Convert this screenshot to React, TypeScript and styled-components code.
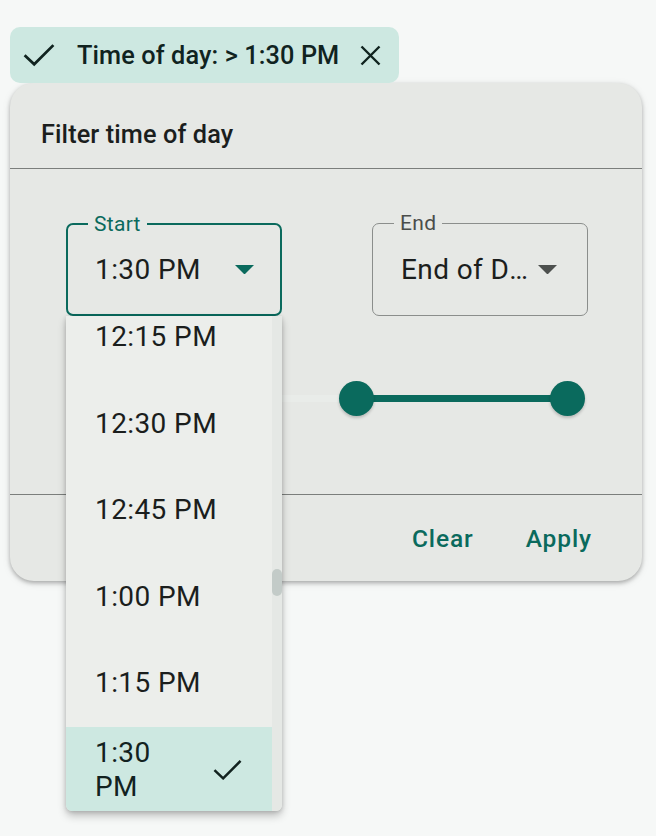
import styled, { createGlobalStyle } from 'styled-components'

const TEAL = '#0a6a5d'
const INK = '#1b1e1d'

const GlobalStyle = createGlobalStyle`
  body {
    margin: 0;
    background: #f6f8f7;
    font-family: Roboto, 'Noto Sans', sans-serif;
    color: ${INK};
  }
`

const options = ['12:15 PM', '12:30 PM', '12:45 PM', '1:00 PM', '1:15 PM', '1:30 PM']
const selected = '1:30 PM'

// slider range is the whole day in quarter hours, start at 1:30 PM
const startPct = (54 / 96) * 100
const endPct = 100

const CheckIcon = ({ width, stroke }: { width: number; stroke: number }) => (
  <svg width={width} height={(width * 22) / 30} viewBox="0 0 30 22" fill="none" stroke="currentColor" strokeWidth={stroke}>
    <polyline points="1.5,11.5 10.5,20 28.5,2" />
  </svg>
)

const CloseIcon = () => (
  <svg width={21} height={21} viewBox="0 0 21 21" fill="none" stroke="currentColor" strokeWidth={2.4}>
    <path d="M1.5 1.5l18 18M19.5 1.5l-18 18" />
  </svg>
)

const ArrowIcon = ({ color }: { color: string }) => (
  <svg width={19} height={9.5} viewBox="7 10 10 5" fill={color}>
    <path d="M7 10l5 5 5-5z" />
  </svg>
)

export default function App() {
  return (
    <>
      <GlobalStyle />
      <Page>
        <Chip>
          <CheckIcon width={32} stroke={2.6} />
          <ChipText>Time of day: &gt; 1:30 PM</ChipText>
          <CloseIcon />
        </Chip>

        <Panel>
          <Header>
            <Title>Filter time of day</Title>
          </Header>

          <Body>
            <Fields>
              <Field $active>
                <FieldLabel $active>Start</FieldLabel>
                <Value>1:30 PM</Value>
                <ArrowBox>
                  <ArrowIcon color={TEAL} />
                </ArrowBox>

                <Menu>
                  <MenuList>
                    {options.map((o) => (
                      <MenuItem key={o} $selected={o === selected}>
                        <ItemText>{o}</ItemText>
                        {o === selected && <CheckIcon width={29} stroke={2.6} />}
                      </MenuItem>
                    ))}
                  </MenuList>
                  <ScrollTrack>
                    <ScrollThumb />
                  </ScrollTrack>
                </Menu>
              </Field>

              <Field>
                <FieldLabel>End</FieldLabel>
                <Value>End of Day</Value>
                <ArrowBox>
                  <ArrowIcon color="#4d504e" />
                </ArrowBox>
              </Field>
            </Fields>

            <Slider>
              <Rail />
              <Track style={{ left: `${startPct}%`, width: `${endPct - startPct}%` }} />
              <Thumb style={{ left: `${startPct}%` }} />
              <Thumb style={{ left: `${endPct}%` }} />
            </Slider>
          </Body>

          <Footer>
            <TextButton>Clear</TextButton>
            <TextButton>Apply</TextButton>
          </Footer>
        </Panel>
      </Page>
    </>
  )
}

const Page = styled.div`
  min-height: 100vh;
  box-sizing: border-box;
  padding: 27px 14px 0 10px;
`

const Chip = styled.div`
  display: inline-flex;
  align-items: center;
  height: 56px;
  box-sizing: border-box;
  padding: 0 18px 0 13px;
  border-radius: 10px;
  background: #cde8e1;
  color: #10231f;

  svg {
    flex-shrink: 0;
  }
`

const ChipText = styled.span`
  margin: 0 21px 0 22px;
  font-size: 25.3px;
  font-weight: 500;
  letter-spacing: 0.1px;
`

const Panel = styled.div`
  width: 632px;
  background: #e6e8e5;
  border-radius: 24px;
  box-shadow: 0 2px 4px rgba(0, 0, 0, 0.28), 0 2px 10px rgba(0, 0, 0, 0.08);
`

const Header = styled.div`
  height: 86px;
  box-sizing: border-box;
  padding: 18px 31px 0;
  display: flex;
  align-items: center;
  border-bottom: 1px solid #7b7e7c;
`

const Title = styled.h2`
  margin: 0;
  font-size: 25.3px;
  font-weight: 500;
  letter-spacing: 0.1px;
  color: ${INK};
`

const Body = styled.div`
  height: 326px;
  box-sizing: border-box;
  padding: 54px 54px 0 56px;
  border-bottom: 1px solid #7b7e7c;
`

const Fields = styled.div`
  display: flex;
  justify-content: space-between;
`

const Field = styled.div<{ $active?: boolean }>`
  position: relative;
  z-index: ${({ $active }) => ($active ? 2 : 1)};
  width: 216px;
  height: 93px;
  box-sizing: border-box;
  display: flex;
  align-items: center;
  border: ${({ $active }) => ($active ? `2px solid ${TEAL}` : '1px solid #8b8e8c')};
  border-radius: 7px;
  padding-left: ${({ $active }) => ($active ? 27 : 28)}px;
  padding-right: ${({ $active }) => ($active ? 21 : 25)}px;
`

const FieldLabel = styled.span<{ $active?: boolean }>`
  position: absolute;
  top: -11.5px;
  left: ${({ $active }) => ($active ? 20 : 21)}px;
  padding: 0 6px;
  background: #e6e8e5;
  font-size: 21px;
  line-height: 21px;
  letter-spacing: 0.3px;
  color: ${({ $active }) => ($active ? TEAL : '#4a4d4b')};
`

const Value = styled.span`
  flex: 1;
  min-width: 0;
  overflow: hidden;
  white-space: nowrap;
  text-overflow: ellipsis;
  font-size: 28px;
  letter-spacing: 0.4px;
  color: ${INK};
`

const ArrowBox = styled.span`
  width: 30px;
  height: 42px;
  flex-shrink: 0;
  display: flex;
  align-items: center;
  justify-content: center;
`

const Menu = styled.div`
  position: absolute;
  top: calc(100% + 2px);
  left: -2px;
  width: 216px;
  height: 495px;
  display: flex;
  overflow: hidden;
  background: #eceeeb;
  border-radius: 0 0 6px 6px;
  box-shadow: 0 5px 8px rgba(0, 0, 0, 0.22), 0 1px 4px rgba(0, 0, 0, 0.16);
`

const MenuList = styled.div`
  flex: 1;
  min-width: 0;
  overflow: hidden;
  display: flex;
  flex-direction: column;

  & > :first-child {
    margin-top: -22px;
  }
`

const MenuItem = styled.div<{ $selected?: boolean }>`
  flex-shrink: 0;
  height: 86.5px;
  box-sizing: border-box;
  display: flex;
  align-items: center;
  padding: 0 30px 0 29px;
  background: ${({ $selected }) => ($selected ? '#cde8e1' : 'transparent')};
  color: ${({ $selected }) => ($selected ? '#12221f' : INK)};

  svg {
    flex-shrink: 0;
    margin-left: 24px;
  }
`

const ItemText = styled.span`
  flex: 1;
  min-width: 0;
  font-size: 28px;
  line-height: 34px;
  letter-spacing: 0.4px;
`

const ScrollTrack = styled.div`
  width: 10px;
  flex-shrink: 0;
  background: #e5e8e5;
`

const ScrollThumb = styled.div`
  margin-top: 253px;
  height: 27px;
  border-radius: 5px;
  background: #c3cbc8;
`

const Slider = styled.div`
  position: relative;
  height: 35px;
  margin: 65px 21px 0 19px;
`

const Rail = styled.div`
  position: absolute;
  left: 0;
  right: 0;
  top: 14px;
  height: 7px;
  border-radius: 4px;
  background: #e9ece9;
`

const Track = styled.div`
  position: absolute;
  top: 14px;
  height: 7px;
  background: ${TEAL};
`

const Thumb = styled.div`
  position: absolute;
  top: 0;
  width: 35px;
  height: 35px;
  margin-left: -17.5px;
  border-radius: 50%;
  background: ${TEAL};
  box-shadow: 0 2px 3px rgba(0, 0, 0, 0.2);
`

const Footer = styled.div`
  height: 86px;
  box-sizing: border-box;
  display: flex;
  align-items: center;
  justify-content: flex-end;
  gap: 24px;
  padding: 0 36px 0 0;
`

const TextButton = styled.button`
  border: none;
  background: none;
  padding: 0 14px;
  height: 70px;
  font-family: Roboto, 'Noto Sans', sans-serif;
  font-size: 24.5px;
  font-weight: 500;
  letter-spacing: 0.9px;
  color: ${TEAL};
  cursor: pointer;
`
